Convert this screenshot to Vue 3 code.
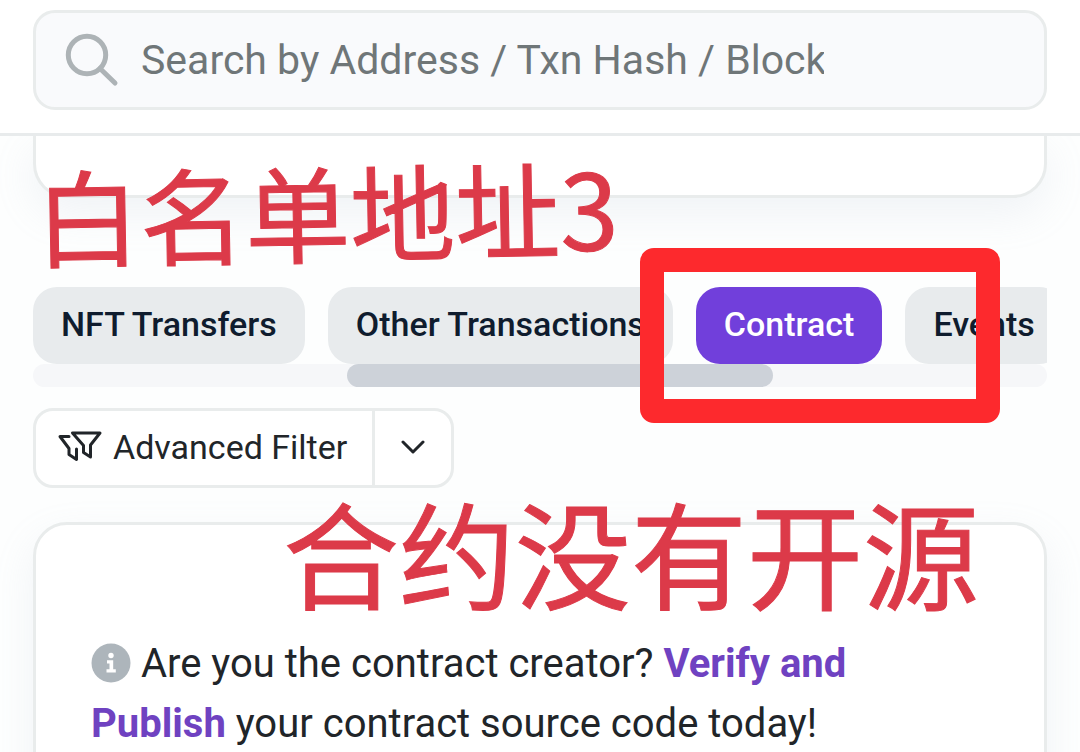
<script setup>
import { ref } from 'vue'

const tabs = ['NFT Transfers', 'Other Transactions', 'Contract', 'Events']
const active = ref('Contract')
const query = ref('')
</script>

<template>
  <div class="page">
    <header class="header">
      <form class="search" role="search" @submit.prevent>
        <svg class="search-icon" viewBox="0 0 54 54" aria-hidden="true">
          <circle cx="22" cy="22" r="18.7" />
          <path d="M35 35.500 50 50" />
        </svg>
        <input
          v-model="query"
          class="search-input"
          type="text"
          aria-label="Search"
          placeholder="Search by Address / Txn Hash / Block"
        />
      </form>
    </header>

    <main class="content">
      <section class="card card-top"></section>

      <nav class="tabs-area">
        <div class="tabs">
          <button
            v-for="tab in tabs"
            :key="tab"
            type="button"
            class="tab"
            :class="{ active: tab === active }"
            @click="active = tab"
          >{{ tab }}</button>
        </div>
        <div class="track"><div class="thumb"></div></div>
      </nav>

      <div class="filter">
        <button type="button" class="filter-main">
          <svg class="filter-icon" viewBox="0 0 44 32" aria-hidden="true">
            <path d="M14.500 2H42L32.500 14V26L25.500 21.500V14.500Z" />
            <path d="M11 5.500H2L11 17.500V23.500L18.500 28.500V18" />
          </svg>
          <span>Advanced Filter</span>
        </button>
        <button type="button" class="filter-more" aria-label="More filters">
          <svg class="chevron" viewBox="0 0 24 16" aria-hidden="true">
            <path d="M2 3 12 13 22 3" />
          </svg>
        </button>
      </div>

      <section class="card card-contract">
        <p class="notice">
          <svg class="info" viewBox="0 0 40 40" aria-hidden="true">
            <circle class="info-disc" cx="20" cy="20" r="19.500" />
            <circle class="info-mark" cx="20" cy="12.500" r="2.700" />
            <path class="info-mark" d="M16 17.300H22.200V26.300H24.800V29.500H15.500V26.300H18.500V20.500H16Z" />
          </svg>
          Are you the contract creator? <a href="#verify">Verify and Publish</a> your contract source code today!
        </p>
      </section>
    </main>

    <div class="note note-top">白名单地址3</div>
    <div class="note note-bottom">合约没有开源</div>
    <div class="marker"></div>
  </div>
</template>

<style>
body {
  margin: 0;
  background: #fdfefe;
}
</style>

<style scoped>
.page {
  position: relative;
  height: 100vh;
  overflow: hidden;
  background: #fdfefe;
  color: #212529;
  font-family: Roboto, "Noto Sans CJK SC", sans-serif;
}

.page *,
.page {
  box-sizing: border-box;
}

button {
  margin: 0;
  border: 0;
  font-family: inherit;
  cursor: pointer;
}

.header {
  position: relative;
  z-index: 1;
  padding: 10px 33px 23px;
  border-bottom: 3px solid #e8ebec;
  background: #fff;
}

.search {
  display: flex;
  align-items: center;
  height: 100px;
  padding: 0 220px 0 29px;
  border: 3px solid #e9ecec;
  border-radius: 22px;
  background: #f9fafc;
}

.search-icon {
  flex: none;
  width: 54px;
  height: 54px;
  margin-right: 22px;
  fill: none;
  stroke: #adb3b6;
  stroke-width: 5;
  stroke-linecap: round;
}

.search-input {
  flex: 1;
  min-width: 0;
  height: 60px;
  padding: 0;
  border: 0;
  outline: 0;
  background: transparent;
  color: #212529;
  font-family: inherit;
  font-size: 41px;
}

.search-input::placeholder {
  color: #6f7678;
  opacity: 1;
}

.content {
  padding: 0 33px;
}

.card {
  border: 3px solid #e9ecec;
  border-radius: 34px;
  background: #fff;
  box-shadow: 0 16px 40px rgba(160, 175, 200, 0.14);
}

.card-top {
  height: 62px;
  border-top: 0;
  border-radius: 0 0 34px 34px;
}

.tabs-area {
  margin-top: 89px;
}

.tabs {
  display: flex;
  gap: 23px;
  overflow: hidden;
}

.tab {
  flex: none;
  height: 77px;
  padding: 0 28px 4px;
  border-radius: 24px;
  background: #e8ebed;
  color: #0f1c2e;
  font-size: 34px;
  font-weight: 500;
}

.tab.active {
  background: #713fdb;
  color: #fff;
}

.track {
  height: 23px;
  border-radius: 12px;
  background: #f6f7f9;
}

.thumb {
  width: 42%;
  height: 23px;
  margin-left: 31%;
  border-radius: 12px;
  background: #cdd2d9;
}

.filter {
  display: inline-flex;
  height: 80px;
  margin-top: 21px;
  border: 3px solid #e9ecec;
  border-radius: 20px;
  background: #fff;
  vertical-align: top;
}

.filter-main {
  display: flex;
  align-items: center;
  gap: 11px;
  padding: 0 25px 2px 22px;
  background: transparent;
  color: #212529;
  font-size: 34px;
}

.filter-icon {
  width: 44px;
  height: 32px;
  fill: none;
  stroke: #212529;
  stroke-width: 3;
  stroke-linecap: round;
  stroke-linejoin: round;
}

.filter-more {
  display: flex;
  align-items: center;
  padding: 0 26px 2px;
  border-left: 3px solid #e9ecec;
  background: transparent;
}

.chevron {
  width: 24px;
  height: 16px;
  fill: none;
  stroke: #212529;
  stroke-width: 3;
  stroke-linecap: round;
  stroke-linejoin: round;
}

.card-contract {
  margin-top: 34px;
  padding: 109px 55px 60px;
}

.notice {
  margin: 0;
  font-size: 40px;
  line-height: 60px;
}

.notice a {
  color: #6f42c1;
  font-weight: 700;
  text-decoration: none;
}

.info {
  width: 40px;
  height: 40px;
  vertical-align: -6px;
}

.info-disc {
  fill: #adb5bb;
}

.info-mark {
  fill: #fff;
}

.note {
  position: absolute;
  z-index: 2;
  color: #dc3a49;
  font-family: "Noto Sans CJK SC", sans-serif;
  line-height: 1;
  white-space: nowrap;
  pointer-events: none;
  -webkit-text-stroke: 1px #dc3a49;
}

.note-top {
  top: 157px;
  left: 35px;
  font-size: 105px;
  transform: rotate(-1deg);
}

.note-bottom {
  top: 492px;
  left: 283px;
  font-size: 116px;
}

.marker {
  position: absolute;
  z-index: 2;
  top: 248px;
  left: 640px;
  width: 360px;
  height: 175px;
  border: 24px solid #fd292d;
  border-radius: 14px;
  pointer-events: none;
}
</style>
